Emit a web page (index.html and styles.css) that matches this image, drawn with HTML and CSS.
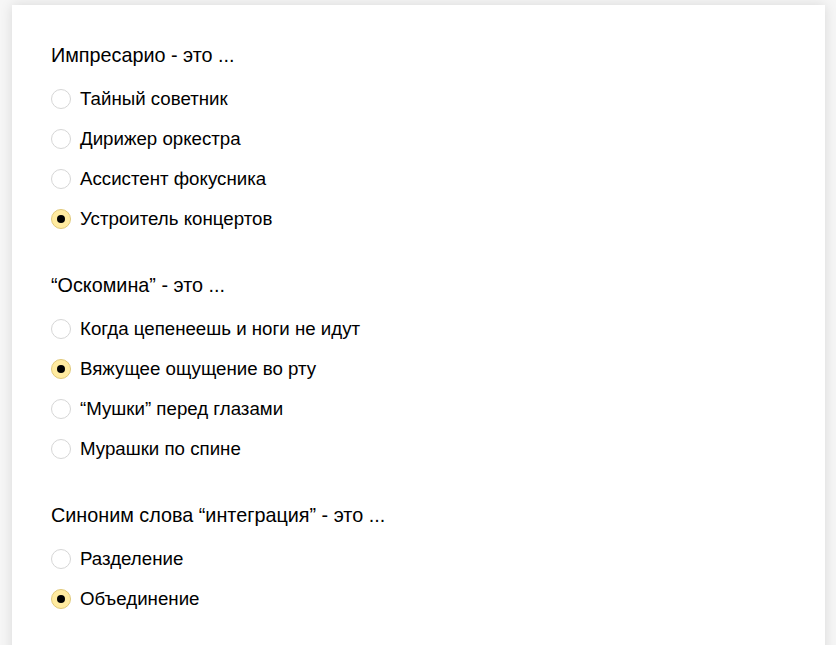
FILE: index.html
```html
<!DOCTYPE html>
<html lang="ru">

<head>
    <meta charset="utf-8">
    <title>Тест</title>
    <link rel="stylesheet" href="styles.css">
</head>

<body>
    <div class="card">
        <div class="question">
            <div class="question-title">Импресарио - это ...</div>
            <label class="option"><span class="radio"></span>Тайный советник</label>
            <label class="option"><span class="radio"></span>Дирижер оркестра</label>
            <label class="option"><span class="radio"></span>Ассистент фокусника</label>
            <label class="option"><span class="radio checked"></span>Устроитель концертов</label>
        </div>

        <div class="question">
            <div class="question-title">“Оскомина” - это ...</div>
            <label class="option"><span class="radio"></span>Когда цепенеешь и ноги не идут</label>
            <label class="option"><span class="radio checked"></span>Вяжущее ощущение во рту</label>
            <label class="option"><span class="radio"></span>“Мушки” перед глазами</label>
            <label class="option"><span class="radio"></span>Мурашки по спине</label>
        </div>

        <div class="question">
            <div class="question-title">Синоним слова “интеграция” - это ...</div>
            <label class="option"><span class="radio"></span>Разделение</label>
            <label class="option"><span class="radio checked"></span>Объединение</label>
        </div>
    </div>
</body>
</html>
```

FILE: styles.css
```css
body {
    font-family: "Liberation Sans", Arial, sans-serif;
    background-color: #f6f6f6;
    margin: 0;
    padding: 5px 11px 0 12px;
    color: #000;
}

.card {
    background-color: #fff;
    box-shadow: 0 0 12px rgba(0, 0, 0, 0.12);
    padding: 38px 39px 40px;
    min-height: 700px;
}

.question {
    margin-bottom: 34px;
}

.question-title {
    font-size: 19.8px;
    line-height: 24px;
    margin-bottom: 12px;
}

.option {
    display: flex;
    align-items: center;
    height: 40px;
    font-size: 18.7px;
    cursor: pointer;
}

.radio {
    width: 18px;
    height: 18px;
    border: 1px solid #d6d6d6;
    border-radius: 50%;
    margin-right: 9px;
    position: relative;
    flex-shrink: 0;
}

.radio.checked {
    background-color: #ffeba0;
    border-color: #e0c878;
}

.radio.checked::after {
    content: "";
    position: absolute;
    left: 5px;
    top: 5px;
    width: 8px;
    height: 8px;
    border-radius: 50%;
    background-color: #000;
}
```
